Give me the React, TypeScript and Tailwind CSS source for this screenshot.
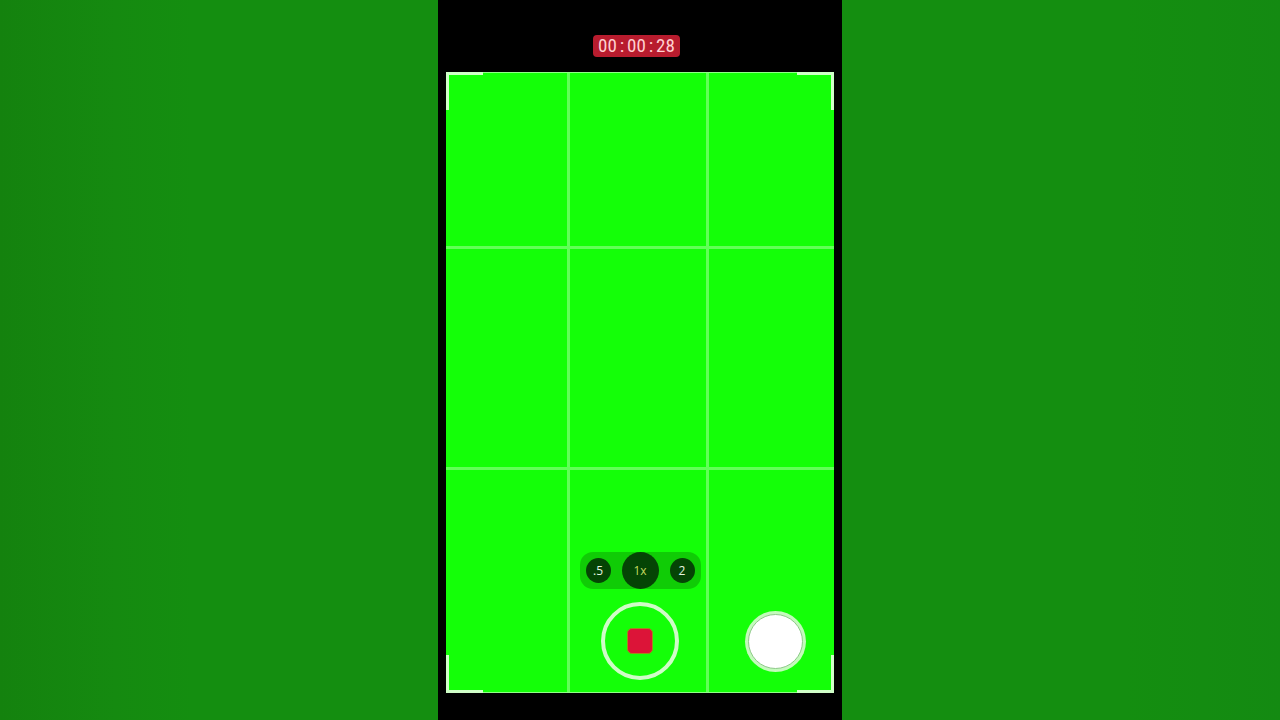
import { Fragment, useState } from "react";
import clsx from "clsx";

const ZOOMS = [
  { value: 0.5, label: ".5" },
  { value: 1, label: "1" },
  { value: 2, label: "2" },
];

const CORNERS = [
  "top-0 left-0 border-t-3 border-l-3",
  "top-0 right-0 border-t-3 border-r-3",
  "bottom-0 left-0 border-b-3 border-l-3",
  "bottom-0 right-0 border-b-3 border-r-3",
];

function Timer({ seconds }: { seconds: number }) {
  const parts = [Math.floor(seconds / 3600), Math.floor(seconds / 60) % 60, seconds % 60];

  return (
    <time className="flex h-[22px] items-center rounded bg-[#b81c2e] px-[5px] font-['Liberation_Sans_Narrow','Roboto_Condensed',Roboto,sans-serif] text-[19px] leading-6 text-[#ffd0d0]">
      {parts.map((part, i) => (
        <Fragment key={i}>
          {i > 0 && <span className="w-2.5 text-center">:</span>}
          <span className="flex w-[19px] justify-center">{String(part).padStart(2, "0")}</span>
        </Fragment>
      ))}
    </time>
  );
}

function Grid() {
  return (
    <div className="absolute inset-0 grid grid-cols-[121fr_136fr_125fr] grid-rows-[174fr_218fr_223fr] gap-[3px] bg-[#62ff58]">
      {Array.from({ length: 9 }, (_, i) => (
        <div key={i} className="bg-[#14ff08]" />
      ))}
    </div>
  );
}

function ZoomPicker() {
  const [zoom, setZoom] = useState(1);

  return (
    <div className="flex items-center gap-[11px] rounded-[13px] bg-black/20 px-1.5">
      {ZOOMS.map(({ value, label }) => {
        const active = value === zoom;
        return (
          <button
            key={value}
            type="button"
            aria-pressed={active}
            onClick={() => setZoom(value)}
            className={clsx(
              "flex items-center justify-center rounded-full bg-[#054405] text-[12px] leading-4",
              active ? "size-[37px] text-[#c4d860]" : "size-[25px] text-[#e4f5e0]"
            )}
          >
            {active ? `${label}x` : label}
          </button>
        );
      })}
    </div>
  );
}

export default function App() {
  return (
    <div className="flex min-h-screen justify-center bg-[linear-gradient(to_right,#14820e,#158a10_9%,#148e10_15%,#148e10_88%,#148a12)] font-['Open_Sans',sans-serif]">
      <main className="flex w-full max-w-[404px] flex-col bg-black px-2">
        <header className="flex h-[72px] items-end justify-center pr-[7px] pb-[15px]">
          <Timer seconds={28} />
        </header>

        <section className="relative mb-[27px] flex flex-1 flex-col justify-end">
          <Grid />
          <div className="absolute inset-0 border-y border-[#90ff88]" />
          {CORNERS.map((corner) => (
            <div key={corner} className={clsx("absolute h-[38px] w-[37px] border-[#d0ffc8]", corner)} />
          ))}

          <div className="relative flex flex-col items-center gap-[13px] pb-[13px]">
            <ZoomPicker />
            <div className="grid w-full grid-cols-[1fr_auto_1fr] items-center px-7">
              <button
                type="button"
                aria-label="Stop recording"
                className="col-start-2 flex size-[78px] items-center justify-center rounded-full border-4 border-[#d0fcc8]"
              >
                <span className="size-[26px] rounded-[5px] border border-[#a08a1c] bg-[#dc1438]" />
              </button>
              <button
                type="button"
                aria-label="Take photo"
                className="flex size-[61px] items-center justify-center justify-self-end rounded-full bg-[#c4fabc]"
              >
                <span className="size-[55px] rounded-full border border-[#8fc98a] bg-white" />
              </button>
            </div>
          </div>
        </section>
      </main>
    </div>
  );
}
